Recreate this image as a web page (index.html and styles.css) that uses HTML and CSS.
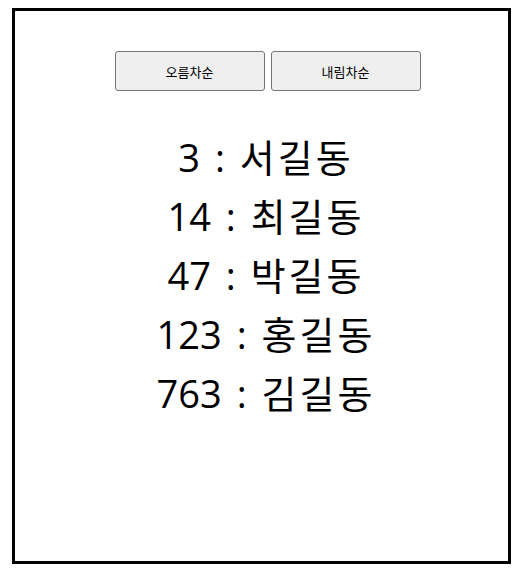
FILE: index.html
```html
<!DOCTYPE html>
<html lang="ko">
<head>
  <meta charset="UTF-8" />
  <meta name="viewport" content="width=device-width, initial-scale=1.0"/>
  <title>정렬</title>
  <link rel="stylesheet" href="styles.css">
</head>
<body>
  <div class="box">
    <div class="buttons">
      <button class="sort-btn">오름차순</button>
      <button class="sort-btn">내림차순</button>
    </div>

    <div class="list">
      <div class="item">3 : <span class="name">서길동</span></div>
      <div class="item">14 : <span class="name">최길동</span></div>
      <div class="item">47 : <span class="name">박길동</span></div>
      <div class="item">123 : <span class="name">홍길동</span></div>
      <div class="item">763 : <span class="name">김길동</span></div>
    </div>
  </div>
</body>
</html>
```

FILE: styles.css
```css
body {
  margin: 8px;
  font-family: "Noto Sans CJK KR", "Noto Sans", sans-serif;
  color: #000;
  background: #fff;
}
.box {
  margin-left: 4px;
  width: 493px;
  height: 550px;
  border: 3px solid #000;
}
.buttons {
  display: flex;
  justify-content: center;
  gap: 6px;
  padding-top: 40px;
  padding-left: 12px;
}
.sort-btn {
  width: 150px;
  height: 40px;
  font-family: "Noto Sans CJK KR", sans-serif;
  font-size: 13px;
  color: #000;
  background: #efefef;
  border: 1px solid #767676;
  border-radius: 3px;
  padding: 0;
}
.list {
  margin-top: 37px;
  padding-left: 6px;
  text-align: center;
}
.item {
  font-family: "Open Sans", "Noto Sans CJK KR", sans-serif;
  font-size: 38px;
  line-height: 59px;
  word-spacing: 5px;
}
.name {
  font-family: "Noto Sans CJK KR", sans-serif;
  line-height: 1;
  letter-spacing: 3px;
  margin-right: -3px;
}
```
